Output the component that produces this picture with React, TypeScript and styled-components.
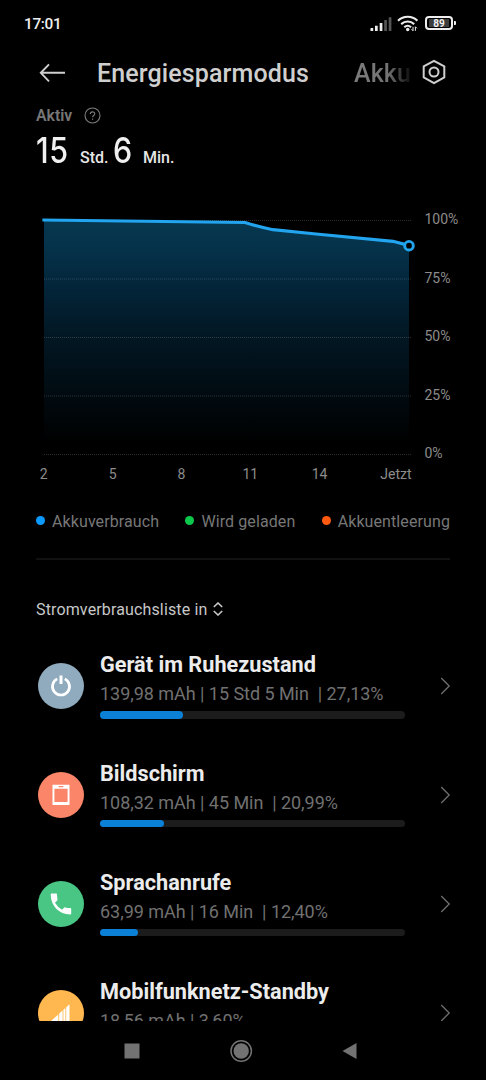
import React from "react";
import styled, { createGlobalStyle } from "styled-components";

const GlobalStyle = createGlobalStyle`
  * { box-sizing: border-box; }
  body { margin: 0; background: #000; font-family: Roboto, "Liberation Sans", sans-serif; }
  svg { display: block; flex: none; }
`;

const Screen = styled.div`
  width: 486px;
  height: 1080px;
  overflow: hidden;
  display: flex;
  flex-direction: column;
  background: #000;
  color: #e6e6e6;
  white-space: pre;
`;

const StatusBar = styled.header`
  height: 47px;
  flex: none;
  display: flex;
  align-items: center;
  justify-content: space-between;
  padding: 0 33px 0 24px;
`;

const Clock = styled.span`
  font-size: 15.4px;
  font-weight: 500;
  letter-spacing: -0.35px;
  margin-top: 1px;
  color: #eee;
`;

const StatusIcons = styled.div`
  display: flex;
  align-items: center;
`;

const TitleBar = styled.nav`
  height: 51px;
  flex: none;
  display: flex;
  align-items: center;
  padding: 0 40px 0 39px;
`;

const Tab = styled.span<{ $left: number; $faded?: boolean }>`
  margin-left: ${(p) => p.$left}px;
  margin-top: 2px;
  font-size: 25px;
  font-weight: 500;
  line-height: 30px;
  letter-spacing: 0.12px;
  width: ${(p) => (p.$faded ? "56px" : "212px")};
  color: ${(p) => (p.$faded ? "transparent" : "#cfcfcf")};
  ${(p) =>
    p.$faded &&
    "background: linear-gradient(90deg, #7c7c7c 0, #747474 60%, #111 100%); background-clip: text; -webkit-background-clip: text;"}
`;

const SettingsSlot = styled.div`
  margin-left: auto;
  margin-top: -1px;
`;

const Summary = styled.section`
  height: 102px;
  flex: none;
  padding: 7px 36px 0;
`;

const SummaryLabel = styled.div`
  display: flex;
  align-items: center;
  gap: 8px;
  height: 20px;
  font-size: 15.8px;
  font-weight: 600;
  color: #777;
`;

const Duration = styled.div`
  display: flex;
  align-items: baseline;
  height: 44px;
  margin-top: 3px;
  line-height: 44px;
`;

const BigNumber = styled.span<{ $width: number }>`
  width: ${(p) => p.$width}px;
  font-family: Inter, Roboto, sans-serif;
  font-size: 35px;
  font-weight: 450;
  letter-spacing: 0.8px;
  color: #f0f0f0;
  transform: scaleX(0.87);
  transform-origin: 0 50%;
`;

const Unit = styled.span<{ $width: number }>`
  width: ${(p) => p.$width}px;
  font-size: 16px;
  font-weight: 500;
  color: #e6e6e6;
`;

const ChartArea = styled.section`
  height: 290px;
  flex: none;
`;

const AxisText = styled.text`
  font-family: Roboto, sans-serif;
  font-size: 14px;
  fill: #8c8c8c;
`;

const Legend = styled.ul`
  display: flex;
  justify-content: space-between;
  align-items: center;
  list-style: none;
  margin: 0 36px;
  padding: 0;
  height: 62px;
  flex: none;
`;

const LegendItem = styled.li<{ $color: string }>`
  display: flex;
  align-items: center;
  gap: 7px;
  font-size: 16px;
  letter-spacing: 0.1px;
  color: #777;
  &::before {
    content: "";
    width: 9px;
    height: 9px;
    margin-top: -2px;
    border-radius: 50%;
    background: ${(p) => p.$color};
  }
`;

const Divider = styled.hr`
  border: 0;
  margin: 6px 36px 0;
  height: 2px;
  flex: none;
  background: #111;
`;

const ListHeading = styled.h2`
  display: flex;
  align-items: center;
  gap: 6px;
  margin: 39px 36px 1px;
  height: 20px;
  flex: none;
  font-size: 16px;
  letter-spacing: 0.14px;
  font-weight: 400;
  color: #c8c8c8;
`;

const List = styled.main`
  flex: 1;
  min-height: 0;
  overflow: hidden;
  padding-top: 11.4px;
`;

const Row = styled.article`
  height: 108.9px;
  display: flex;
  align-items: center;
  padding: 0 35px 0 38px;
`;

const Badge = styled.div<{ $color: string }>`
  width: 46px;
  height: 46px;
  flex: none;
  border-radius: 50%;
  background: ${(p) => p.$color};
  display: flex;
  align-items: center;
  justify-content: center;
`;

const RowBody = styled.div`
  width: 305px;
  flex: none;
  margin: 0 36px 3px 16px;
`;

const RowTitle = styled.h3`
  margin: 0;
  font-size: 21.7px;
  line-height: 30px;
  font-weight: 700;
  color: #ececec;
`;

const RowDetail = styled.p`
  margin: 0;
  font-size: 18px;
  letter-spacing: -0.04px;
  line-height: 27px;
  color: #717171;
`;

const Track = styled.div`
  height: 7.5px;
  margin-top: 4px;
  border-radius: 4px;
  background: #1c1c1c;
`;

const Fill = styled.div`
  height: 100%;
  border-radius: 4px;
  background: #0a80d6;
`;

const NavBar = styled.footer`
  height: 59px;
  flex: none;
  display: flex;
  align-items: center;
  justify-content: space-between;
  padding: 1px 129px 0 124px;
`;

const BackArrow = () => (
  <svg width="27" height="20" viewBox="0 0 27 20" fill="none" stroke="#cfcfcf" strokeWidth="1.9">
    <path d="M10 1.3 1.8 9.8 10 18.3M1.8 9.8H26" />
  </svg>
);

const SettingsIcon = () => (
  <svg width="24" height="26" viewBox="0 0 24 26" fill="none" stroke="#cfcfcf" strokeWidth="2">
    <path d="M12 1.8 22.3 7.4V18.4L12 24.200 1.700 18.400V7.400Z" strokeLinejoin="round" />
    <circle cx="12" cy="13" r="4.500" />
  </svg>
);

const HelpIcon = () => (
  <svg width="17" height="17" viewBox="0 0 17 17" fill="none" stroke="#7c7c7c" strokeWidth="1.1">
    <circle cx="8.5" cy="8.5" r="7.5" />
    <path d="M6.3 7.1c0-3 4.5-2.8 4.5-.3 0 1.700-2.200 1.800-2.200 3.500M8.600 11.500v1.300" />
  </svg>
);

const SignalIcon = () => (
  <svg width="22" height="16" viewBox="0 0 22 16">
    <path fill="#eee" d="M.5 12h2.700v3H.5zM5 9.800h2.700V15H5zM9.700 7h2.700v8H9.700z" />
    <path fill="#555" d="M14.200 4h2.700v11h-2.700zM18.700 1.300h2.700V15h-2.700z" />
  </svg>
);

const WifiIcon = () => (
  <svg width="22" height="17" viewBox="0 0 22 17" fill="none" stroke="#eee" strokeWidth="2.100">
    <path d="M1 5.700C6.600.5 14.800.5 20.400 5.700M4.200 9.100c3.800-3.400 9.200-3.400 13 0M7.300 12.200c2-1.700 4.800-1.700 6.800 0" />
    <circle cx="10.700" cy="14.500" r="1.700" fill="#eee" stroke="none" />
    <path d="M16 11.800v4l-1.500-1.500M18.400 15.800v-4l1.500 1.500" strokeWidth="1" />
  </svg>
);

const BatteryFrame = styled.div`
  position: relative;
  width: 28px;
  height: 14px;
  margin: -1px 0 0 6px;
  border: 2px solid #eee;
  border-radius: 4px;
  padding: 1px 2px;
  display: flex;
  &::after {
    content: "";
    position: absolute;
    right: -5px;
    top: 3px;
    width: 2px;
    height: 4px;
    border-radius: 0 1px 1px 0;
    background: #eee;
  }
`;

const BatteryLevel = styled.span`
  flex: 1;
  background: #3c3c3c;
  color: #f2f2f2;
  font-size: 10px;
  line-height: 9px;
  font-weight: 700;
  text-align: center;
`;

const SortIcon = () => (
  <svg width="10" height="14" viewBox="0 0 10 14" fill="none" stroke="#c8c8c8" strokeWidth="1.600">
    <path d="M.8 5 5 1l4.200 4M.8 9 5 13l4.200-4" />
  </svg>
);

const Chevron = () => (
  <svg width="10" height="18" viewBox="0 0 10 18" fill="none" stroke="#707070" strokeWidth="1.300">
    <path d="M.2 1 8.200 9 .2 17" />
  </svg>
);

const PowerGlyph = () => (
  <svg width="22" height="24" viewBox="0 0 22 24" fill="none" stroke="#fff">
    <path d="M7.200 4.900a8.500 8.500 0 1 0 7.600 0" strokeWidth="2.700" />
    <path d="M11 1.500v8.500" strokeWidth="3" />
  </svg>
);

const ScreenGlyph = () => (
  <svg width="18" height="22" viewBox="0 0 18 22">
    <path
      fill="#fff"
      fillRule="evenodd"
      d="M.5.700h17V21H.5zM2.400 4.800V18h13.200V4.800zM6.700 2v1.200h4.600V2z"
    />
  </svg>
);

const PhoneGlyph = () => (
  <svg width="22" height="22" viewBox="0 0 22 22">
    <path
      fill="#fff"
      d="M.7 1.500Q.7.500 1.700.500H6.200Q7 .500 7 1.500 7 4 7.500 6.300 7.600 7 7.200 7.500L5 9.700Q7.700 14.300 12 16.700L14.300 14.500Q14.700 14.200 15.400 14.400 17.800 15.200 20.200 15.100 21.200 15.100 21.200 16.100V20.500Q21.200 21.500 20.200 21.500C9 21.300.8 13 .7 1.500Z"
    />
  </svg>
);

const CellGlyph = () => (
  <svg width="22" height="22" viewBox="0 0 22 22">
    <path fill="#fff" d="M.5 19.500 8.300 12.400v7.100zM9.200 11.600l3.400-3.100v11H9.200zM13.400 7.800l2-1.800v13.500h-2zM16.200 5.200 19.500 2.200v17.300h-3.300z" />
  </svg>
);

const yTicks = ["100%", "75%", "50%", "25%", "0%"];
const xTicks: [string, number][] = [
  ["2", 43.7],
  ["5", 112.8],
  ["8", 181.5],
  ["11", 250.3],
  ["14", 319.5],
  ["Jetzt", 396],
];
const curve = "M44 20 245 22.500Q261 27.500 273 29.700L316 34 393 41.300 409 45.500";

const BatteryChart = () => (
  <svg width="486" height="290" viewBox="0 0 486 290">
    <defs>
      <linearGradient id="area" x1="0" y1="20" x2="0" y2="254" gradientUnits="userSpaceOnUse">
        <stop offset="0" stopColor="#06384f" />
        <stop offset="0.12" stopColor="#05324a" />
        <stop offset="0.3" stopColor="#032438" />
        <stop offset="0.5" stopColor="#021723" />
        <stop offset="0.75" stopColor="#010a10" />
        <stop offset="0.95" stopColor="#000" />
      </linearGradient>
    </defs>
    <path d={`${curve}V254H44Z`} fill="url(#area)" />
    {yTicks.map((label, i) => (
      <g key={label}>
        <line
          x1="44"
          x2="411"
          y1={20.5 + i * 58.5}
          y2={20.5 + i * 58.5}
          stroke="#fff"
          strokeOpacity="0.17"
          strokeDasharray="1 1"
        />
        <AxisText x="424.500" y={24 + i * 58.5}>
          {label}
        </AxisText>
      </g>
    ))}
    <path d={curve} fill="none" stroke="#22a4ee" strokeWidth="3.200" strokeLinecap="square" />
    <circle cx="409" cy="45.700" r="4.300" fill="#000" stroke="#22a4ee" strokeWidth="2.900" />
    {xTicks.map(([label, x]) => (
      <AxisText key={label} x={x} y="279" textAnchor="middle">
        {label}
      </AxisText>
    ))}
  </svg>
);

const consumers = [
  { title: "Gerät im Ruhezustand", detail: "139,98 mAh | 15 Std 5 Min  | 27,13%", share: 27.13, color: "#90abbd", glyph: <PowerGlyph /> },
  { title: "Bildschirm", detail: "108,32 mAh | 45 Min  | 20,99%", share: 20.99, color: "#fb8568", glyph: <ScreenGlyph /> },
  { title: "Sprachanrufe", detail: "63,99 mAh | 16 Min  | 12,40%", share: 12.4, color: "#4ac684", glyph: <PhoneGlyph /> },
  { title: "Mobilfunknetz-Standby", detail: "18,56 mAh | 3,60%", share: 3.6, color: "#ffb74f", glyph: <CellGlyph /> },
];

export default function App() {
  return (
    <Screen>
      <GlobalStyle />
      <StatusBar>
        <Clock>17:01</Clock>
        <StatusIcons>
          <SignalIcon />
          <svg width="5" height="1" />
          <WifiIcon />
          <BatteryFrame>
            <BatteryLevel>89</BatteryLevel>
          </BatteryFrame>
        </StatusIcons>
      </StatusBar>
      <TitleBar>
        <BackArrow />
        <Tab $left={31}>Energiesparmodus</Tab>
        <Tab $left={45} $faded>Akku</Tab>
        <SettingsSlot>
          <SettingsIcon />
        </SettingsSlot>
      </TitleBar>
      <Summary>
        <SummaryLabel>
          Aktiv <HelpIcon />
        </SummaryLabel>
        <Duration>
          <BigNumber $width={44}>15</BigNumber>
          <Unit $width={32.5}>Std.</Unit>
          <BigNumber $width={30.5}>6</BigNumber>
          <Unit $width={40}>Min.</Unit>
        </Duration>
      </Summary>
      <ChartArea>
        <BatteryChart />
      </ChartArea>
      <Legend>
        <LegendItem $color="#0b9aff">Akkuverbrauch</LegendItem>
        <LegendItem $color="#0cc94b">Wird geladen</LegendItem>
        <LegendItem $color="#ff5a10">Akkuentleerung</LegendItem>
      </Legend>
      <Divider />
      <ListHeading>
        Stromverbrauchsliste in
        <SortIcon />
      </ListHeading>
      <List>
        {consumers.map((c) => (
          <Row key={c.title}>
            <Badge $color={c.color}>{c.glyph}</Badge>
            <RowBody>
              <RowTitle>{c.title}</RowTitle>
              <RowDetail>{c.detail}</RowDetail>
              <Track>
                <Fill style={{ width: `${c.share}%` }} />
              </Track>
            </RowBody>
            <Chevron />
          </Row>
        ))}
      </List>
      <NavBar>
        <svg width="16" height="16">
          <path fill="#727272" d="M.5.500h15v15H.5z" />
        </svg>
        <svg width="24" height="24">
          <circle cx="12.200" cy="12" r="10.200" fill="none" stroke="#727272" strokeWidth="1.500" />
          <circle cx="12.200" cy="12" r="7.700" fill="#727272" />
        </svg>
        <svg width="15" height="18">
          <path fill="#727272" d="M.5 9 14.500 1v16z" />
        </svg>
      </NavBar>
    </Screen>
  );
}
